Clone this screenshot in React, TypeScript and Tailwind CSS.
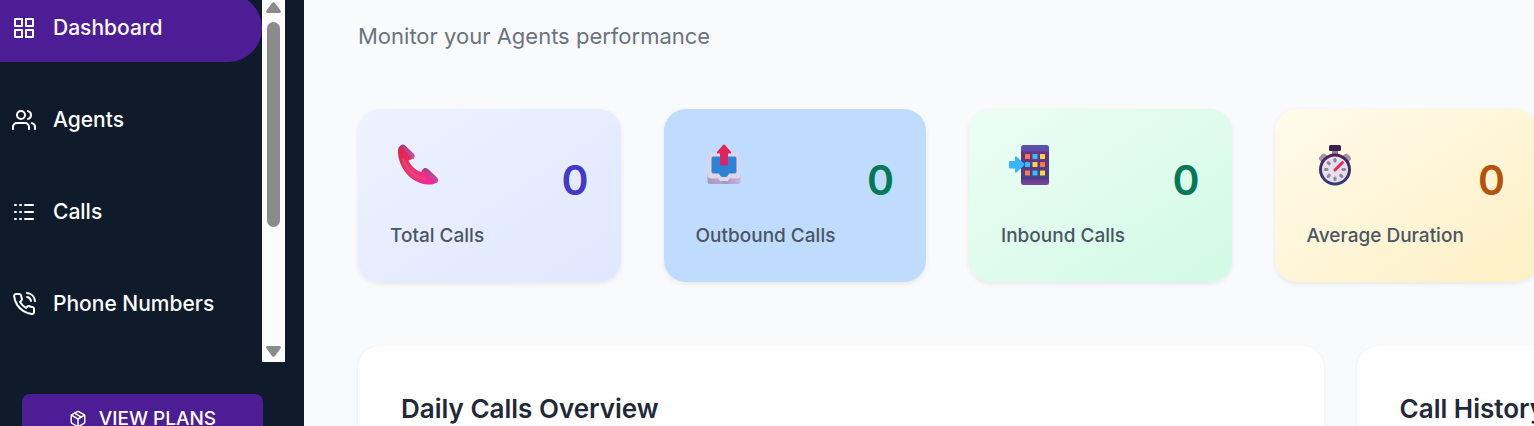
import React from "react";
import { FiGrid, FiUsers, FiPhoneCall, FiPackage } from "react-icons/fi";
import { Logs } from "lucide-react";

const PhoneEmoji = () => (
  <svg viewBox="0 0 42 42" className="w-[42px] h-[42px]" aria-hidden="true">
    <defs>
      <linearGradient id="phone-body" x1="0" y1="0" x2="1" y2="1">
        <stop offset="0" stopColor="#e0203f" />
        <stop offset="0.5" stopColor="#e8376f" />
        <stop offset="1" stopColor="#f522a6" />
      </linearGradient>
      <linearGradient id="phone-cap" x1="0" y1="0" x2="1" y2="1">
        <stop offset="0" stopColor="#a8407f" />
        <stop offset="1" stopColor="#c44fb0" />
      </linearGradient>
    </defs>
    <path
      d="M1 7C1 4 2.500 1.500 5 1L16 12C16.500 14 15 16 11.500 16.500C13.500 21 18.500 26.500 24.500 28C24.500 26 26 24.500 28.500 24L41 36C41 39 36 41 31 40.500C14 39.500 1 24 1 7Z"
      fill="url(#phone-body)"
    />
    <path d="M6 14C8 24 17 33 28 35" stroke="#ea4f78" strokeWidth="3" fill="none" opacity="0.6" />
    <path d="M3.500 2C4.500 .3 7 .2 8 1.200L17 10C18 11.500 18 14 16 15Z" fill="url(#phone-cap)" />
    <path d="M26 26.500C26 24 29 23 31 25L40 33.500C41.700 35.500 41.500 37.500 40 39Z" fill="url(#phone-cap)" />
  </svg>
);

const OutboxEmoji = () => (
  <svg viewBox="0 0 42 42" className="w-[42px] h-[42px]" aria-hidden="true">
    <defs>
      <linearGradient id="outbox-arrow" x1="0" y1="0" x2="1" y2="1">
        <stop offset="0" stopColor="#ee2348" />
        <stop offset="1" stopColor="#cf2478" />
      </linearGradient>
      <linearGradient id="outbox-base" x1="0" y1="0" x2="1" y2="0">
        <stop offset="0" stopColor="#a99bb9" />
        <stop offset="0.4" stopColor="#b99fd2" />
        <stop offset="0.5" stopColor="#a394b8" />
        <stop offset="1" stopColor="#c9b2e6" />
      </linearGradient>
    </defs>
    <path d="M4.500 30h33v7.500a2.500 2.500 0 0 1-2.500 2.500H7a2.500 2.500 0 0 1-2.500-2.500Z" fill="url(#outbox-base)" />
    <rect x="4.500" y="9" width="33" height="25.500" rx="4" fill="#dcd6e6" />
    <path d="M14.500 33h13l-2.500 4h-8Z" fill="#dcd6e6" />
    <path
      d="M10.500 12.500H31.500Q33.500 12.500 33.500 14.500V27.500Q33.500 29.500 31.500 29.500H26Q24.500 33 22.500 33H19.500Q17.500 33 16 29.500H10.500Q8.500 29.500 8.500 27.500V14.500Q8.500 12.500 10.500 12.500Z"
      fill="#2f83d6"
    />
    <path d="M20.200 .8Q21 0 21.800 .8L28 8Q28.500 9.300 27.500 9.500H25V20.500Q25 21.500 24 21.500H18Q17 21.500 17 20.500V9.500H14.500Q13.500 9.300 14 8Z" fill="url(#outbox-arrow)" />
  </svg>
);

const MobileArrowEmoji = () => (
  <svg viewBox="0 0 42 42" className="w-[42px] h-[42px]" aria-hidden="true">
    <defs>
      <linearGradient id="mobile-body" x1="0" y1="0" x2="0" y2="1">
        <stop offset="0" stopColor="#5c52ad" />
        <stop offset="0.15" stopColor="#5750a8" />
        <stop offset="0.17" stopColor="#6b3385" />
        <stop offset="0.85" stopColor="#453f87" />
        <stop offset="0.87" stopColor="#683b8c" />
        <stop offset="1" stopColor="#7948a3" />
      </linearGradient>
    </defs>
    <g transform="translate(1 0)">
      <rect x="12" y="1" width="28" height="40" rx="2.500" fill="url(#mobile-body)" />
      <rect x="16" y="10" width="5" height="5" rx=".5" fill="#ff7940" />
      <rect x="23.500" y="10" width="5" height="5" rx=".5" fill="#34bff5" />
      <rect x="31" y="10" width="5" height="5" rx=".5" fill="#ffd43d" />
      <rect x="16" y="18" width="5" height="5" rx=".5" fill="#34bff5" />
      <rect x="23.500" y="18" width="5" height="5" rx=".5" fill="#ffd43d" />
      <rect x="31" y="18" width="5" height="5" rx=".5" fill="#ff7940" />
      <rect x="16" y="26.500" width="5" height="5" rx=".5" fill="#ff7940" />
      <rect x="23.500" y="26.500" width="5" height="5" rx=".5" fill="#34bff5" />
      <rect x="31" y="26.500" width="5" height="5" rx=".5" fill="#ffd43d" />
      <path d="M1 17H6V13Q6.500 12 7.500 12.500L15 19.500Q16 20.500 15 21.500L7.500 28.500Q6.500 29 6 28V24.500H1Q0 24.500 0 23.500V18Q0 17 1 17Z" fill="#3ab4ff" />
    </g>
  </svg>
);

const StopwatchEmoji = () => (
  <svg viewBox="0 0 42 42" className="w-[42px] h-[42px]" aria-hidden="true">
    <defs>
      <linearGradient id="watch-ring" x1="0" y1="0" x2="0" y2="1">
        <stop offset="0" stopColor="#532055" />
        <stop offset="1" stopColor="#343b7c" />
      </linearGradient>
    </defs>
    <rect x="18" y="6" width="6" height="5" fill="#8f8798" />
    <rect x="15" y="1" width="12" height="6" rx="1.500" fill="#38204f" />
    <path d="M5 14Q7 10 10 9.500L14 12L8 18Q4.500 16 5 14Z" fill="#9d96a6" />
    <path d="M37 14Q35 10 32 9.500L28 12L34 18Q37.500 16 37 14Z" fill="#9d96a6" />
    <circle cx="21" cy="25.500" r="14.500" fill="#e6dff0" stroke="url(#watch-ring)" strokeWidth="3" />
    <path
      d="M21 15.500v1.500M21 34v1.500M11.500 25.500h1.500M29 25.500h1.500M14.200 18.700l1 1M14.200 32.300l1-1M26.800 31.300l1 1"
      stroke="#8f8798"
      strokeWidth="3.200"
      strokeLinecap="round"
    />
    <path d="M21 26L28.500 18.500" stroke="#ee2353" strokeWidth="3" strokeLinecap="round" />
  </svg>
);

const navItems = [
  { label: "Dashboard", icon: <FiGrid className="w-6 h-6" />, active: true },
  { label: "Agents", icon: <FiUsers className="w-6 h-6" />, active: false },
  { label: "Calls", icon: <Logs className="w-6 h-6" />, active: false },
  { label: "Phone Numbers", icon: <FiPhoneCall className="w-6 h-6" />, active: false },
];

const stats = [
  {
    label: "Total Calls",
    value: 0,
    icon: <PhoneEmoji />,
    card: "bg-linear-to-br from-[#eef2ff] to-[#e0e7ff]",
    color: "text-[#4338ca]",
  },
  {
    label: "Outbound Calls",
    value: 0,
    icon: <OutboxEmoji />,
    card: "bg-[#bfdbfe]",
    color: "text-[#047857]",
  },
  {
    label: "Inbound Calls",
    value: 0,
    icon: <MobileArrowEmoji />,
    card: "bg-linear-to-br from-[#ecfdf5] to-[#d1fae5]",
    color: "text-[#047857]",
  },
  {
    label: "Average Duration",
    value: 0,
    icon: <StopwatchEmoji />,
    card: "bg-linear-to-br from-[#fffbeb] to-[#fdf0c4]",
    color: "text-[#b45309]",
  },
];

const Sidebar = () => (
  <aside className="w-[304px] shrink-0 bg-[#0f1a2a] text-white">
    <div className="flex w-[285px]">
      <nav className="flex-1 h-[362px] overflow-hidden">
        <ul className="flex flex-col gap-6 -mt-1.5">
          {navItems.map((item) => (
            <li key={item.label}>
              <a
                href="#"
                className={`flex items-center gap-[17px] h-[68px] pl-3 rounded-r-full text-[21px] leading-8 font-medium whitespace-nowrap ${
                  item.active ? "bg-[#4c1d95]" : ""
                }`}
              >
                {item.icon}
                {item.label}
              </a>
            </li>
          ))}
        </ul>
      </nav>

      {/* Scrollbar */}
      <div className="w-[23px] flex flex-col items-center justify-between bg-[#fcfcfc] pt-[2px] pb-[5px]">
        <div className="flex flex-col items-center gap-[9px]">
          <svg viewBox="0 0 15 11" className="w-[15px] h-[11px]" fill="#8b8b8b">
            <path d="M6.200 .8Q7.500 -.5 8.800 .8L14.500 8.500Q15.500 11 13.500 11H1.500Q-.5 11 .5 8.500Z" />
          </svg>
          <div className="w-[13px] h-[205px] rounded-full bg-[#8b8b8b]" />
        </div>
        <svg viewBox="0 0 15 11" className="w-[15px] h-[11px] rotate-180" fill="#8b8b8b">
          <path d="M6.200 .8Q7.500 -.5 8.800 .8L14.500 8.500Q15.500 11 13.500 11H1.500Q-.5 11 .5 8.500Z" />
        </svg>
      </div>
    </div>

    <div className="pt-8 pl-[22px] pr-[41px]">
      <button className="w-full h-[50px] flex items-center justify-center gap-3 rounded-lg bg-[#4c1d95] text-[19px] font-medium">
        <FiPackage className="w-[18px] h-[18px]" />
        VIEW PLANS
      </button>
    </div>
  </aside>
);

export default function App() {
  return (
    <div className="flex h-screen overflow-hidden bg-[#f9fafb] font-['Inter',sans-serif]">
      <Sidebar />

      <main className="flex-1 min-w-0 overflow-hidden pl-[54px]">
        <div className="-mr-[3px]">
          <p className="pt-5 text-[22px] leading-8 text-[#6b7280]">
            Monitor your Agents performance
          </p>

          {/* Stats */}
          <section className="grid grid-cols-4 gap-[43px] mt-[57px]">
            {stats.map((stat) => (
              <div
                key={stat.label}
                className={`flex items-center justify-between h-[173px] pt-0.5 px-8 rounded-[22px] shadow-[0_2px_5px_rgba(0,0,0,0.08)] ${stat.card}`}
              >
                <div className="flex flex-col gap-9">
                  <div className="pl-[7px]">{stat.icon}</div>
                  <h3 className="text-[19px] leading-7 font-medium text-[#4b5563] whitespace-nowrap">
                    {stat.label}
                  </h3>
                </div>
                <p className={`pb-8 text-[41px] leading-none font-semibold ${stat.color}`}>{stat.value}</p>
              </div>
            ))}
          </section>

          {/* Charts */}
          <section className="flex gap-[33px] mt-16">
            <div className="w-[81.9%] shrink-0 h-96 p-[43px] rounded-[22px] bg-white shadow-[0_1px_4px_rgba(0,0,0,0.06)]">
              <h2 className="text-[26px] leading-10 font-semibold text-[#1f2937]">
                Daily Calls Overview
              </h2>
            </div>
            <div className="w-[41%] shrink-0 h-96 p-[43px] rounded-[22px] bg-white shadow-[0_1px_4px_rgba(0,0,0,0.06)]">
              <h2 className="text-[26px] leading-10 font-semibold text-[#1f2937]">
                Call History
              </h2>
            </div>
          </section>
        </div>
      </main>
    </div>
  );
}
